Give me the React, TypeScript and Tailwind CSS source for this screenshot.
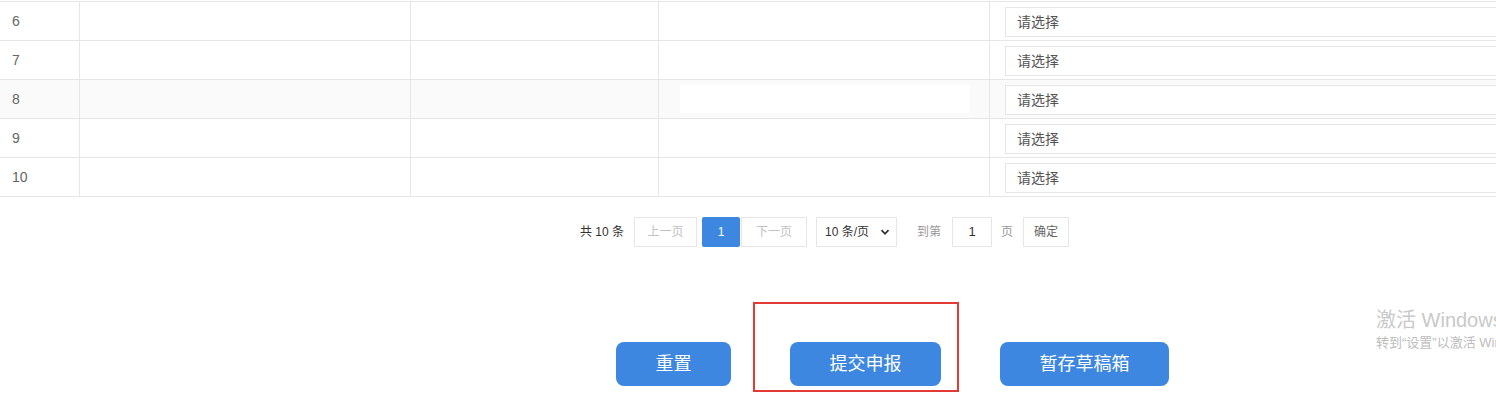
import React from "react";

const rows = [6, 7, 8, 9, 10];

function Row({ n }: { n: number }) {
  const hl = n === 8;
  return (
    <div className={`flex h-[39px] border-b border-[#e6e6e6] ${hl ? "bg-[#fafafa]" : "bg-white"}`}>
      <div className="w-[80px] shrink-0 border-r border-[#e6e6e6] flex items-center pl-[12px] pt-px text-[14px] text-[#666]">
        {n}
      </div>
      <div className="w-[331px] shrink-0 border-r border-[#e6e6e6]" />
      <div className="w-[248px] shrink-0 border-r border-[#e6e6e6]" />
      <div className="w-[331px] shrink-0 border-r border-[#e6e6e6] flex items-center pl-[21px] pr-[19px]">
        {hl && <div className="h-[28px] w-full bg-white" />}
      </div>
      <div className="flex-1 flex items-center pl-[15px] pt-px">
        <div className="h-[30px] w-[540px] shrink-0 border border-[#e6e6e6] bg-white flex items-center pl-[11px] pt-px text-[14px] text-[#555]">
          请选择
        </div>
      </div>
    </div>
  );
}

export default function App() {
  return (
    <div
      className="relative w-[1496px] h-[396px] overflow-hidden bg-white"
      style={{ fontFamily: '"Liberation Sans", "Noto Sans CJK SC", sans-serif' }}
    >
      <div className="mt-px border-t border-[#e6e6e6]">
        {rows.map((n) => (
          <Row key={n} n={n} />
        ))}
      </div>

      <div className="mt-[20px] flex items-center pl-[580px] h-[30px] text-[12px]">
        <span className="text-[#333] mr-[10px]">共 10 条</span>
        <div className="w-[63px] h-[30px] border border-[#e6e6e6] flex items-center justify-center text-[#c2c2c2]">
          上一页
        </div>
        <div className="ml-[5px] w-[38px] h-[30px] rounded-[2px] bg-[#3d87e0] flex items-center justify-center text-white">
          1
        </div>
        <div className="ml-px w-[66px] h-[30px] border border-[#e6e6e6] flex items-center justify-center text-[#c2c2c2]">
          下一页
        </div>
        <div className="ml-[9px] w-[81px] h-[30px] border border-[#e6e6e6] flex items-center justify-between pl-[8px] pr-[6px] text-[#333]">
          <span>10 条/页</span>
          <svg width="10" height="10" viewBox="0 0 10 10">
            <path d="M1.5 3.2 L5 6.8 L8.5 3.2" fill="none" stroke="#333" strokeWidth="1.8" />
          </svg>
        </div>
        <span className="ml-[20px] text-[#999]">到第</span>
        <div className="ml-[11px] w-[40px] h-[30px] border border-[#e6e6e6] flex items-center justify-center text-[#333] text-[13px]">
          1
        </div>
        <span className="ml-[9px] text-[#999]">页</span>
        <div className="ml-[10px] w-[46px] h-[30px] border border-[#e6e6e6] flex items-center justify-center text-[#666]">
          确定
        </div>
      </div>

      <div className="mt-[95px] flex pl-[616px] gap-[59px]">
        <button className="w-[115px] h-[44px] rounded-[8px] bg-[#3d87e0] text-white text-[18px]">
          重置
        </button>
        <button className="w-[151px] h-[44px] rounded-[8px] bg-[#3d87e0] text-white text-[18px]">
          提交申报
        </button>
        <button className="w-[169px] h-[44px] rounded-[8px] bg-[#3d87e0] text-white text-[18px]">
          暂存草稿箱
        </button>
      </div>

      <div className="absolute left-[753px] top-[302px] w-[206px] h-[90px] border-2 border-[#e53935]" />

      <div className="absolute left-[1376px] top-[310px] whitespace-nowrap leading-none">
        <div className="text-[20px] text-[#c9c9c9]">激活 Windows</div>
        <div className="mt-[6px] text-[13px] text-[#bdbdbd]">转到“设置”以激活 Windows。</div>
      </div>
    </div>
  );
}
